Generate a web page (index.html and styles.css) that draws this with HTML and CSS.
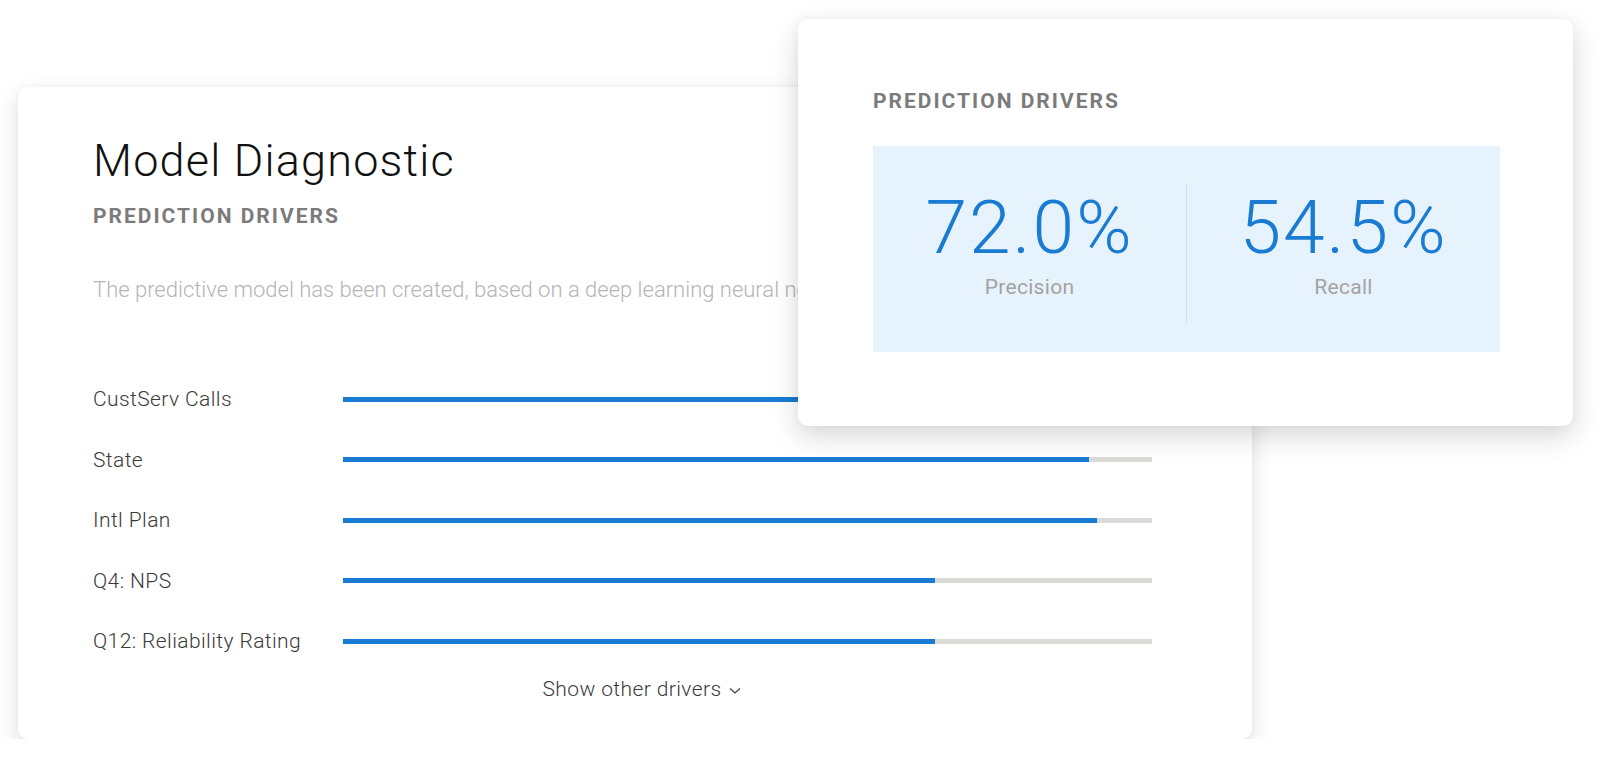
FILE: index.html
```html
<!DOCTYPE html>
<html lang="en">
<head>
    <meta charset="UTF-8">
    <meta name="viewport" content="width=device-width, initial-scale=1.0">
    <title>Model Diagnostic</title>
    <link rel="stylesheet" href="styles.css">
</head>
<body>
    <div class="stage">
        <div class="card diagnostic">
            <h1>Model Diagnostic</h1>
            <h2 class="eyebrow">Prediction drivers</h2>

            <p class="lead">
                The predictive model has been created, based on a deep learning neural network.
            </p>

            <div class="drivers">
                <div class="driver">
                    <span class="driver-name">CustServ Calls</span>
                    <div class="track"><div class="fill" style="width: 100%;"></div></div>
                </div>
                <div class="driver">
                    <span class="driver-name">State</span>
                    <div class="track"><div class="fill" style="width: 92.2%;"></div></div>
                </div>
                <div class="driver">
                    <span class="driver-name">Intl Plan</span>
                    <div class="track"><div class="fill" style="width: 93.2%;"></div></div>
                </div>
                <div class="driver">
                    <span class="driver-name">Q4: NPS</span>
                    <div class="track"><div class="fill" style="width: 73.2%;"></div></div>
                </div>
                <div class="driver">
                    <span class="driver-name">Q12: Reliability Rating</span>
                    <div class="track"><div class="fill" style="width: 73.2%;"></div></div>
                </div>
            </div>

            <button class="more">
                Show other drivers
                <svg width="12" height="8" viewBox="0 0 12 8" aria-hidden="true">
                    <path d="M1 1.5 L6 6 L11 1.5" fill="none" stroke="#444" stroke-width="1.3"/>
                </svg>
            </button>
        </div>

        <!-- score panel floats over the top-right corner of the diagnostic card -->
        <div class="card scores">
            <h2 class="eyebrow">Prediction drivers</h2>
            <div class="metrics">
                <div class="metric">
                    <div class="metric-value">72.0%</div>
                    <div class="metric-label">Precision</div>
                </div>
                <div class="metric">
                    <div class="metric-value">54.5%</div>
                    <div class="metric-label">Recall</div>
                </div>
            </div>
        </div>
    </div>
</body>
</html>
```

FILE: styles.css
```css
body {
    margin: 0;
    padding: 0;
    background: #fff;
    font-family: Roboto, "Liberation Sans", sans-serif;
    color: #333;
    overflow: hidden;
}

.stage {
    position: relative;
    padding: 87px 0 0 18px;
}

.card {
    background: #fff;
    border-radius: 10px;
    box-shadow: 0 8px 22px rgba(0, 0, 0, 0.13), 0 0 6px rgba(0, 0, 0, 0.03);
}

.diagnostic {
    width: 1234px;
    height: 652px;
    box-sizing: border-box;
    padding: 48px 100px 0 75px;
}

h1 {
    margin: 0;
    font-size: 45px;
    line-height: 52px;
    font-weight: 300;
    letter-spacing: 1.2px;
    color: #111;
}

.eyebrow {
    margin: 17px 0 0;
    font-size: 21px;
    line-height: 24px;
    font-weight: 700;
    letter-spacing: 2px;
    text-transform: uppercase;
    color: #7b7b7b;
}

.lead {
    margin: 48px 0 0;
    font-size: 22px;
    line-height: 28px;
    font-weight: 300;
    color: #b5b5b5;
    white-space: nowrap;
}

.drivers {
    margin-top: 83px;
    display: flex;
    flex-direction: column;
    gap: 36.5px;
}

.driver {
    display: flex;
    align-items: center;
    height: 24px;
}

.driver-name {
    width: 250px;
    flex: none;
    font-size: 21px;
    line-height: 24px;
    font-weight: 300;
    letter-spacing: 0.4px;
    color: #3a3a3a;
}

.track {
    flex: 1;
    height: 5px;
    background: #dadad6;
}

.fill {
    height: 100%;
    background: #1a7bd3;
}

.more {
    display: flex;
    align-items: center;
    gap: 7px;
    margin: 24px auto 0;
    padding: 0 0 0 38px;
    border: none;
    background: none;
    font-family: inherit;
    font-size: 21px;
    line-height: 24px;
    font-weight: 300;
    letter-spacing: 0.4px;
    color: #3a3a3a;
    cursor: pointer;
}

.more svg {
    margin-top: 3px;
}

.scores {
    position: absolute;
    top: 19px;
    left: 798px;
    width: 775px;
    height: 407px;
    box-sizing: border-box;
    padding: 70px 73px 0 75px;
    box-shadow: 0 10px 28px rgba(0, 0, 0, 0.16), 0 0 8px rgba(0, 0, 0, 0.04);
}

.scores .eyebrow {
    margin: 0;
}

.metrics {
    margin-top: 33px;
    display: flex;
    padding: 37px 0 29px;
    background: #e7f3fc;
}

.metric {
    flex: 1;
    display: flex;
    flex-direction: column;
    align-items: center;
    padding: 0 0 24px;
}

.metric + .metric {
    border-left: 1px solid #d3dde5;
}

.metric-value {
    font-size: 75px;
    line-height: 88px;
    font-weight: 300;
    letter-spacing: 2px;
    color: #1a7bd3;
}

.metric-label {
    margin-top: 4px;
    font-size: 21px;
    line-height: 24px;
    letter-spacing: 0.3px;
    color: #a3a3a3;
}
```
